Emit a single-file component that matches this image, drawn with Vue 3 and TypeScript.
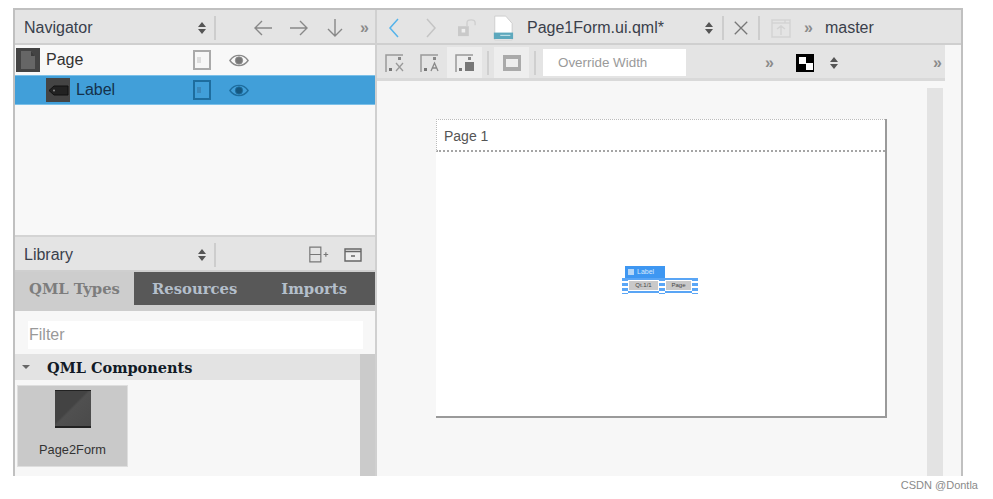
<template>
  <div class="screen">
    <div class="window">
      <aside class="left">
        <div class="bar nav-bar">
          <span class="bar-title">Navigator</span>
          <svg class="updown" viewBox="0 0 12 14"><path d="M6 1l4 5H2zM6 13l4-5H2z" /></svg>
          <i class="vsep"></i>
          <svg class="arrow first" viewBox="0 0 20 20"><path d="M19 10H2M9 3l-7 7 7 7" /></svg>
          <svg class="arrow" viewBox="0 0 20 20"><path d="M1 10h17M11 3l7 7-7 7" /></svg>
          <svg class="arrow" viewBox="0 0 20 20"><path d="M10 1v17M3 11l7 7 7-7" /></svg>
          <span class="chev nav-chev">»</span>
        </div>

        <div class="tree">
          <div v-for="row in rows" :key="row.name" class="tree-row" :class="{ selected: row.selected }">
            <span class="type-icon" :class="{ nested: row.nested }">
              <svg v-if="row.nested" viewBox="0 0 24 24">
                <path d="M8 8h14v9H8l-5-4.500z" fill="#222" stroke="#111" />
                <circle cx="8" cy="12.500" r="1" fill="#888" />
              </svg>
              <svg v-else viewBox="0 0 24 24">
                <path d="M5 3h10l4 5v13H5z" fill="#666" />
                <path d="M15 3v5h4" fill="#3b3b3b" />
              </svg>
            </span>
            <span class="row-name">{{ row.name }}</span>
            <span class="check"><i></i></span>
            <svg class="eye" viewBox="0 0 22 14">
              <path d="M1 7c5-7.500 15-7.500 20 0-5 7.500-15 7.500-20 0z" fill="none" stroke-width="1.500" />
              <circle cx="11" cy="7" r="4" />
            </svg>
          </div>
        </div>

        <div class="bar lib-bar">
          <span class="bar-title">Library</span>
          <svg class="updown" viewBox="0 0 12 14"><path d="M6 1l4 5H2zM6 13l4-5H2z" /></svg>
          <i class="vsep"></i>
          <svg class="lib-add" viewBox="0 0 24 18"><path d="M2 1h12v16H2zM2 9h12M17 9h5M19.500 6.500v5" /></svg>
          <svg class="lib-box" viewBox="0 0 18 16"><path d="M1 2h16v12H1zM1 4.500h16M7 9h4" /></svg>
        </div>

        <div class="tabs">
          <span class="tab active">QML Types</span>
          <div class="tab-rest">
            <span class="tab">Resources</span>
            <span class="tab">Imports</span>
          </div>
        </div>

        <div class="filter-wrap"><div class="filter">Filter</div></div>

        <div class="lib-list">
          <div class="lib-main">
            <div class="section"><i class="tri"></i>QML Components</div>
            <div class="item">
              <span class="item-icon"></span>
              <span class="item-name">Page2Form</span>
            </div>
          </div>
          <div class="lib-scroll"></div>
        </div>
      </aside>

      <main class="right">
        <div class="bar top-bar">
          <svg class="nav-btn back" viewBox="0 0 14 22"><path d="M11 2L3 11l8 9" /></svg>
          <svg class="nav-btn fwd" viewBox="0 0 14 22"><path d="M3 2l8 9-8 9" /></svg>
          <svg class="lock" viewBox="0 0 22 20">
            <path d="M1 8h12v11H1z" fill="#c9c9c9" />
            <path d="M11 8V4c0-4 9-4 9 0v3" fill="none" stroke="#cfcfcf" stroke-width="1.500" />
            <rect x="5" y="11" width="4" height="4" fill="#eee" />
          </svg>
          <svg class="file" viewBox="0 0 24 28">
            <path d="M3 1h12l7 8v18H3z" fill="#fff" stroke="#ccc" />
            <path d="M2 19h21v7H2z" fill="#5da8bd" />
            <path d="M9 22h11" stroke="#d8edf2" />
          </svg>
          <span class="doc-name">Page1Form.ui.qml*</span>
          <svg class="updown doc-arrows" viewBox="0 0 12 14"><path d="M6 1l4 5H2zM6 13l4-5H2z" /></svg>
          <i class="vsep"></i>
          <svg class="close" viewBox="0 0 18 18"><path d="M2 2l14 14M16 2L2 16" /></svg>
          <i class="vsep"></i>
          <svg class="split" viewBox="0 0 20 20">
            <path d="M1 2h18v17H1zM1 5h18M10 8v9M6 11l4-3 4 3M14 2v3" />
          </svg>
          <span class="chev top-chev">»</span>
          <span class="branch">master</span>
        </div>

        <div class="tool-row">
          <div class="tools">
            <span v-for="tool in tools" :key="tool.mark" class="tool" :class="{ lit: tool.lit }">
              <svg viewBox="0 0 24 24">
                <path d="M3 21V4h17" fill="none" stroke="#999" stroke-width="1.500" />
                <rect x="6" y="17" width="3" height="3" fill="#777" />
                <rect x="15" y="6" width="3" height="3" fill="#888" />
                <rect v-if="tool.mark === 'fill'" x="12" y="11" width="9" height="9" fill="#777" />
                <path v-else-if="tool.mark === 'x'" d="M13 12l7 8M20 12l-7 8" stroke="#999" stroke-width="1.300" />
                <path v-else d="M13 20l3.500-8 3.500 8M14 17h5" stroke="#888" fill="none" stroke-width="1.300" />
              </svg>
            </span>
            <i class="tool-sep"></i>
            <span class="tool lit">
              <svg viewBox="0 0 24 24">
                <rect x="3" y="4" width="18" height="16" fill="#aaa" />
                <rect x="6" y="8" width="12" height="8" fill="#eee" />
              </svg>
            </span>
            <i class="tool-sep"></i>
            <div class="override">Override Width</div>
            <span class="chev over-chev">»</span>
            <span class="checker"><i></i><i></i></span>
            <svg class="updown" viewBox="0 0 12 14"><path d="M6 1l4 5H2zM6 13l4-5H2z" /></svg>
            <span class="chev end-chev">»</span>
          </div>
        </div>

        <div class="canvas">
          <div class="page">
            <div class="page-head">Page 1</div>
            <div class="page-body">
              <div class="selection">
                <div class="sel-tag"><i></i>Label</div>
                <div class="sel-row">
                  <span class="grip"></span>
                  <span class="field">Qt.1/1</span>
                  <span class="grip"></span>
                  <span class="field short">Page</span>
                  <span class="grip"></span>
                </div>
              </div>
            </div>
          </div>
          <div class="v-scroll"></div>
        </div>
      </main>
    </div>
    <div class="credit">CSDN @Dontla</div>
  </div>
</template>

<script setup lang="ts">
interface TreeRow {
  name: string;
  nested: boolean;
  selected: boolean;
}

interface Tool {
  mark: string;
  lit: boolean;
}

const rows: TreeRow[] = [
  { name: 'Page', nested: false, selected: false },
  { name: 'Label', nested: true, selected: true },
];

const tools: Tool[] = [
  { mark: 'x', lit: false },
  { mark: 'a', lit: false },
  { mark: 'fill', lit: true },
];
</script>

<style>
html,
body {
  margin: 0;
  background: #fff;
}
</style>

<style scoped>
.screen {
  width: 993px;
  height: 499px;
  padding: 8px 0 0 13px;
  box-sizing: border-box;
  font-family: "Liberation Sans", Arial, sans-serif;
  background: #fff;
  overflow: hidden;
  position: relative;
}

.window {
  width: 950px;
  height: 468px;
  box-sizing: border-box;
  border: solid #c0c0c0;
  border-width: 2px 2px 0 2px;
  display: flex;
  background: #f7f7f7;
}

.left {
  width: 360px;
  flex: none;
  display: flex;
  flex-direction: column;
  border-right: 2px solid #d0d0d0;
}

.right {
  flex: 1;
  min-width: 0;
  display: flex;
  flex-direction: column;
}

.bar {
  height: 35px;
  flex: none;
  box-sizing: border-box;
  padding-top: 2px;
  background: #e4e4e4;
  border-bottom: 2px solid #cfcfcf;
  display: flex;
  align-items: center;
}

.bar-title {
  font-size: 16px;
  color: #39404c;
  padding-left: 9px;
  width: 172px;
  box-sizing: content-box;
  flex: none;
}

.updown {
  width: 12px;
  height: 16px;
  flex: none;
  fill: #555;
}

.vsep {
  width: 2px;
  height: 24px;
  margin-left: 6px;
  background: #cdcdcd;
  flex: none;
}

.arrow {
  width: 20px;
  height: 20px;
  margin-left: 16px;
  flex: none;
  fill: none;
  stroke: #888;
  stroke-width: 1.400;
}

.arrow.first {
  margin-left: 37px;
}

.chev {
  color: #8b8b8b;
  font-size: 16px;
  font-weight: 700;
  line-height: 1;
  flex: none;
}

.nav-chev {
  margin-left: 15px;
}

.tree {
  height: 192px;
  flex: none;
  background: #f8f8f8;
  border-bottom: 2px solid #d4d4d4;
  box-sizing: border-box;
}

.tree-row {
  height: 30px;
  display: flex;
  align-items: center;
  box-sizing: border-box;
  color: #333;
  font-size: 16px;
}

.tree-row.selected {
  background: #419fd9;
  color: #14314c;
  border-top: 1px solid #7cc0e8;
  border-bottom: 1px solid #7cc0e8;
}

.type-icon {
  width: 24px;
  height: 24px;
  margin-left: 1px;
  background: #444;
  flex: none;
}

.type-icon.nested {
  margin-left: 31px;
}

.type-icon svg {
  display: block;
  width: 24px;
  height: 24px;
}

.row-name {
  margin-left: 6px;
  width: 147px;
  flex: none;
}

.selected .row-name {
  width: 117px;
}

.check {
  width: 18px;
  height: 20px;
  box-sizing: border-box;
  border: 2px solid #aaa;
  background: #f7f7f7;
  flex: none;
  padding: 5px 8px 5px 2px;
}

.check i {
  display: block;
  height: 100%;
  background: #ddd;
}

.selected .check {
  border-color: #1e6d9e;
  background: #419fd9;
}

.selected .check i {
  background: #3b88bb;
}

.eye {
  width: 20px;
  height: 13px;
  margin-left: 18px;
  fill: #777;
  stroke: #8a8a8a;
  flex: none;
}

.selected .eye {
  fill: #16577f;
  stroke: #1e6d9e;
}

.lib-add {
  width: 22px;
  height: 17px;
  margin-left: 92px;
  fill: none;
  stroke: #777;
  stroke-width: 1.300;
  flex: none;
}

.lib-box {
  width: 18px;
  height: 16px;
  margin-left: 14px;
  fill: #eee;
  stroke: #666;
  stroke-width: 1.400;
  flex: none;
}

.tabs {
  height: 39px;
  flex: none;
  display: flex;
  background: #cdcdcd;
  box-sizing: border-box;
  padding-bottom: 6px;
}

.tab {
  font-family: "DejaVu Serif", "Liberation Serif", serif;
  font-weight: 700;
  font-size: 14.800px;
  color: #7d7d7d;
}

.tab.active {
  width: 119px;
  padding: 8px 0 0 14px;
  box-sizing: border-box;
  flex: none;
}

.tab-rest {
  flex: 1;
  background: #585858;
  display: flex;
  align-items: center;
  padding-left: 18px;
  gap: 44px;
}

.tab-rest .tab {
  color: #b4bfcb;
}

.filter-wrap {
  height: 43px;
  flex: none;
  padding: 10px 12px 5px 13px;
  box-sizing: border-box;
}

.filter {
  height: 28px;
  background: #fff;
  color: #999;
  font-size: 16px;
  line-height: 28px;
  padding-left: 1px;
}

.lib-list {
  flex: 1;
  display: flex;
  min-height: 0;
}

.lib-main {
  flex: 1;
}

.lib-scroll {
  width: 15px;
  background: #cbcbcb;
}

.section {
  height: 26px;
  background: #e3e3e3;
  display: flex;
  align-items: center;
  font-family: "DejaVu Serif", "Liberation Serif", serif;
  font-weight: 700;
  font-size: 14.500px;
  color: #111a26;
}

.tri {
  width: 0;
  height: 0;
  margin: 0 17px 0 7px;
  border: solid transparent;
  border-width: 4px 4px 0;
  border-top-color: #666;
}

.item {
  width: 111px;
  height: 82px;
  margin: 5px 0 0 2px;
  background: #c9c9c9;
  border: 1px solid #dedede;
  box-sizing: border-box;
  display: flex;
  flex-direction: column;
  align-items: center;
  padding-top: 4px;
}

.item-icon {
  width: 36px;
  height: 38px;
  box-sizing: border-box;
  background: linear-gradient(135deg, #434343 45%, #505050 50%, #4a4a4a);
  border: solid #222;
  border-width: 1px 0 2px;
}

.item-name {
  font-size: 12.800px;
  color: #333;
  margin-top: 14px;
}

.top-bar {
  flex: none;
}

.nav-btn {
  width: 14px;
  height: 22px;
  fill: none;
  stroke-width: 1.500;
  flex: none;
}

.back {
  margin-left: 10px;
  stroke: #55b3ea;
}

.fwd {
  margin-left: 23px;
  stroke: #c4c4c4;
}

.lock {
  width: 20px;
  height: 18px;
  margin-left: 19px;
  flex: none;
}

.file {
  width: 22px;
  height: 26px;
  margin-left: 15px;
  flex: none;
}

.doc-name {
  font-size: 16px;
  color: #3a3f4b;
  margin-left: 13px;
  width: 131px;
  white-space: nowrap;
  flex: none;
}

.doc-arrows {
  margin-left: 45px;
}

.close {
  width: 16px;
  height: 16px;
  margin-left: 9px;
  fill: none;
  stroke: #777;
  stroke-width: 1.500;
  flex: none;
}

.top-bar .vsep {
  margin-left: 7px;
}

.close + .vsep {
  margin-left: 9px;
}

.split {
  width: 20px;
  height: 20px;
  margin-left: 11px;
  fill: none;
  stroke: #d3d3d3;
  stroke-width: 1.500;
  flex: none;
}

.top-chev {
  margin-left: 13px;
}

.branch {
  font-size: 16px;
  color: #3a3f4b;
  margin-left: 12px;
}

.tool-row {
  height: 36px;
  flex: none;
  margin-right: 16px;
  background: #e4e4e4;
  border-bottom: 3px solid #d9d9d9;
  box-sizing: border-box;
}

.tools {
  display: flex;
  align-items: center;
  height: 100%;
  padding-top: 2px;
  box-sizing: border-box;
}

.tool {
  width: 35px;
  height: 31px;
  display: flex;
  align-items: center;
  justify-content: center;
  flex: none;
}

.tool.lit {
  background: #eee;
}

.tool svg {
  width: 24px;
  height: 24px;
}

.tool-sep {
  width: 2px;
  height: 24px;
  background: #cfcfcf;
  margin: 0 5px;
  flex: none;
}

.override {
  width: 143px;
  height: 27px;
  margin-left: 2px;
  background: #fff;
  color: #9a9a9a;
  font-size: 13.400px;
  line-height: 27px;
  padding-left: 15px;
  box-sizing: border-box;
  flex: none;
}

.over-chev {
  margin-left: 79px;
}

.checker {
  width: 18px;
  height: 18px;
  margin: 0 14px 0 22px;
  background: #000;
  position: relative;
  flex: none;
}

.checker i {
  position: absolute;
  width: 7px;
  height: 7px;
  background: #fff;
  left: 3px;
  top: 3px;
}

.checker i + i {
  left: 10px;
  top: 9px;
}

.end-chev {
  margin-left: 93px;
}

.canvas {
  flex: 1;
  display: flex;
  min-height: 0;
  padding: 38px 0 0 59px;
  box-sizing: border-box;
}

.page {
  width: 451px;
  height: 299px;
  background: #fff;
  border-right: 2px solid #9a9a9a;
  border-bottom: 2px solid #9a9a9a;
  box-sizing: border-box;
  display: flex;
  flex-direction: column;
  flex: none;
}

.page-head {
  height: 33px;
  box-sizing: border-box;
  border-bottom: 2px dotted #a5a5a5;
  border-top: 1px dotted #bbb;
  border-left: 1px dotted #bbb;
  font-size: 14px;
  color: #555;
  padding: 8px 0 0 7px;
  flex: none;
}

.page-body {
  flex: 1;
  position: relative;
}

.selection {
  position: absolute;
  left: 186px;
  top: 114px;
}

.sel-tag {
  width: 40px;
  height: 12px;
  margin-left: 3px;
  background: #3e97f2;
  color: #d7e9fb;
  font-size: 7px;
  line-height: 12px;
  display: flex;
  align-items: center;
  gap: 3px;
  padding-left: 3px;
  box-sizing: border-box;
}

.sel-tag i {
  width: 6px;
  height: 6px;
  background: #b5d6f7;
}

.sel-row {
  display: flex;
  align-items: center;
  border-top: 2px solid #59a5f5;
  border-bottom: 2px solid #59a5f5;
  height: 11px;
  width: 76px;
  box-sizing: content-box;
}

.grip {
  width: 6px;
  height: 16px;
  background: repeating-linear-gradient(#5aa6f6 0 3px, #fff 3px 5px);
  flex: none;
}

.field {
  width: 29px;
  height: 9px;
  margin: 0 1px;
  background: #c9c9c9;
  color: #444;
  font-size: 6px;
  line-height: 9px;
  text-align: center;
  flex: none;
  overflow: hidden;
}

.field.short {
  width: 25px;
}

.v-scroll {
  width: 16px;
  margin: -31px 0 0 40px;
  background: #e3e3e3;
  flex: none;
}

.credit {
  position: absolute;
  right: 15px;
  bottom: 8px;
  font-size: 11px;
  color: #8a8a8a;
}
</style>
